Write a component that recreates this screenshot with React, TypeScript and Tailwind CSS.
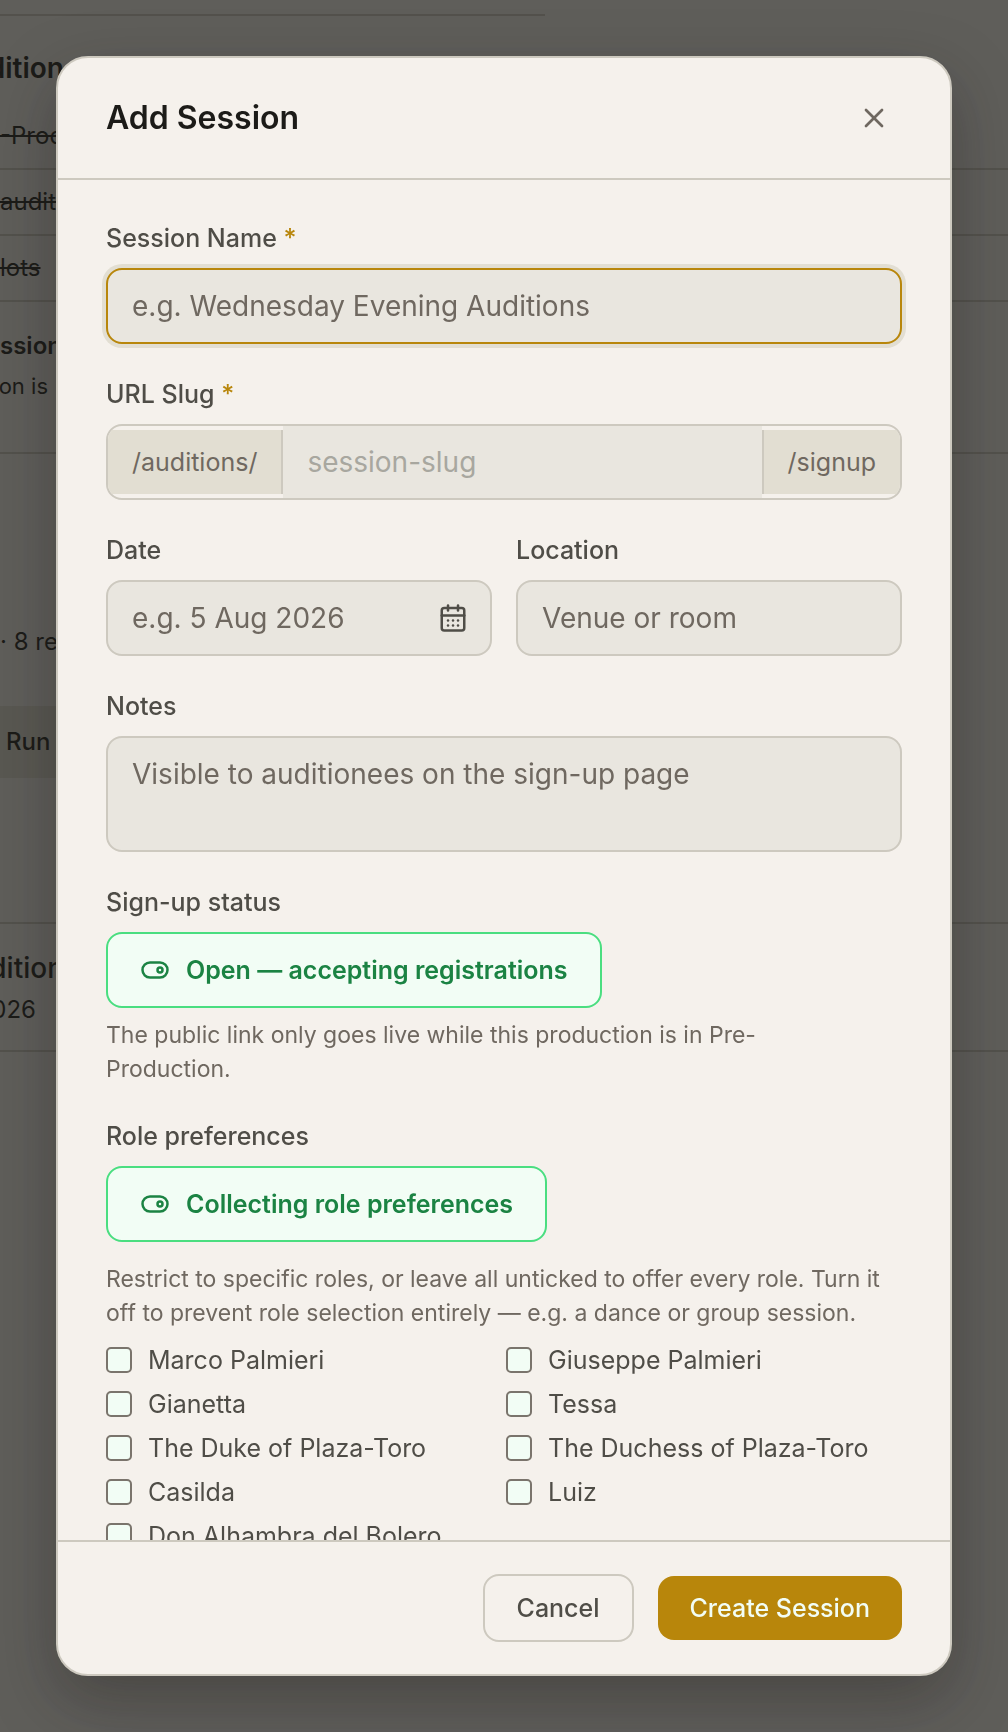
import { useState } from 'react';
import type { ReactNode } from 'react';
import { CalendarDays, X } from 'lucide-react';
import { TbToggleLeft, TbToggleRight } from 'react-icons/tb';

const ROLES = [
  'Marco Palmieri',
  'Giuseppe Palmieri',
  'Gianetta',
  'Tessa',
  'The Duke of Plaza-Toro',
  'The Duchess of Plaza-Toro',
  'Casilda',
  'Luiz',
  'Don Alhambra del Bolero',
];

const inputClass =
  'block w-full rounded-2xl border-2 border-[#cdc9bf] bg-[#e9e6df] px-6 py-4 text-[28px] leading-10 text-[#1c1b18] placeholder:text-[#6f6860] outline-none focus:border-[#b8860b] focus:ring-4 focus:ring-[#e2ded2]';

function Label({ htmlFor, required, children }: { htmlFor: string; required?: boolean; children: ReactNode }) {
  return (
    <label htmlFor={htmlFor} className="mb-3 block text-[25px] leading-9 font-medium text-[#4f4d47]">
      {children}
      {required && <span className="text-[#b8860b]"> *</span>}
    </label>
  );
}

function ToggleButton({ id, on, onClick, children }: { id: string; on: boolean; onClick: () => void; children: ReactNode }) {
  const Icon = on ? TbToggleRight : TbToggleLeft;
  return (
    <button
      id={id}
      type="button"
      aria-pressed={on}
      onClick={onClick}
      className={`flex items-center gap-4 rounded-2xl border-2 px-8 py-[18px] text-[25px] leading-9 font-semibold ${
        on ? 'border-[#4ade80] bg-[#f2fdf5] text-[#1b8343]' : 'border-[#cdc9bf] bg-[#e9e6df] text-[#4f4d47]'
      }`}
    >
      <Icon size={30} />
      {children}
    </button>
  );
}

// The production page that stays visible behind the dialog
function ProductionPage() {
  return (
    <main className="h-screen overflow-hidden bg-[#f5f1ec] text-2xl leading-9 whitespace-nowrap text-[#1c1b18]">
      <div className="h-4 w-[545px] border-b-2 border-[#cdc9bf]" />
      <h2 className="flex h-[88px] w-16 items-center justify-end pt-4 text-[28px] font-semibold">dition</h2>
      <ul className="line-through">
        <li className="border-b-2 border-[#cdc9bf] py-[14px]">-Prod</li>
        <li className="border-b-2 border-[#cdc9bf] py-[14px]">auditi</li>
        <li className="border-b-2 border-[#cdc9bf] py-[14px]">lots</li>
      </ul>
      <div className="h-[152px] border-b-2 border-[#cdc9bf] pt-[26px]">
        <h3 className="font-semibold">ssion</h3>
        <p className="flex w-12 justify-end pt-1 text-[22px]">on is</p>
      </div>
      <p className="pt-[170px] pb-[46px]">· 8 re</p>
      <div className="w-[500px] bg-[#e2ded2] px-1.5 py-[18px] font-medium">Run</div>
      <div className="mt-36 border-y-2 border-[#cdc9bf] pt-6 pb-[22px]">
        <h3 className="flex w-16 justify-end text-[28px] leading-10 font-medium">dition</h3>
        <p className="flex w-9 justify-end pt-1">026</p>
      </div>
    </main>
  );
}

export default function App() {
  const [name, setName] = useState('');
  const [slug, setSlug] = useState('');
  const [signupOpen, setSignupOpen] = useState(true);
  const [collectRoles, setCollectRoles] = useState(true);
  const [roles, setRoles] = useState<string[]>([]);

  function toggleRole(role: string) {
    setRoles((prev) => (prev.includes(role) ? prev.filter((r) => r !== role) : [...prev, role]));
  }

  return (
    <div className="font-[Inter,sans-serif]">
      <ProductionPage />

      <div className="fixed inset-0 flex items-center justify-center bg-[#1c1b18]/69 p-14">
        <form
          role="dialog"
          aria-labelledby="dialog-title"
          onSubmit={(event) => event.preventDefault()}
          className="flex max-h-full w-full max-w-4xl flex-col overflow-hidden rounded-[32px] border-2 border-[#cdc9bf] bg-[#f5f1ec] shadow-[0_24px_64px_rgba(28,27,24,0.35)]"
        >
          <header className="flex shrink-0 items-center justify-between border-b-2 border-[#cdc9bf] px-12 py-8">
            <h1 id="dialog-title" className="text-[32px] leading-10 font-semibold text-[#1c1b18]">
              Add Session
            </h1>
            <button type="button" aria-label="Close" className="rounded-xl p-3 text-[#6f6860]">
              <X size={32} />
            </button>
          </header>

          <div className="min-h-0 flex-1 overflow-y-auto px-12 py-10 [scrollbar-width:none]">
            <div className="flex flex-col gap-8">
              <div>
                <Label htmlFor="name" required>
                  Session Name
                </Label>
                <input
                  id="name"
                  autoFocus
                  value={name}
                  onChange={(event) => setName(event.target.value)}
                  placeholder="e.g. Wednesday Evening Auditions"
                  className={`${inputClass} caret-transparent`}
                />
              </div>

              <div>
                <Label htmlFor="slug" required>
                  URL Slug
                </Label>
                <div className="flex items-center overflow-hidden rounded-2xl border-2 border-[#cdc9bf]">
                  <span className="border-r-2 border-[#cdc9bf] bg-[#e2ded2] px-6 py-[14px] text-[25px] leading-9 text-[#6f6860]">
                    /auditions/
                  </span>
                  <input
                    id="slug"
                    value={slug}
                    onChange={(event) => setSlug(event.target.value)}
                    placeholder="session-slug"
                    className="min-w-0 flex-1 bg-[#e9e6df] px-6 py-4 text-[28px] leading-10 text-[#1c1b18] outline-none placeholder:text-[#a8a79f]"
                  />
                  <span className="border-l-2 border-[#cdc9bf] bg-[#e2ded2] px-6 py-[14px] text-[25px] leading-9 text-[#6f6860]">
                    /signup
                  </span>
                </div>
              </div>

              <div className="grid grid-cols-2 gap-6">
                <div>
                  <Label htmlFor="date">Date</Label>
                  <div className="relative">
                    <input id="date" placeholder="e.g. 5 Aug 2026" className={`${inputClass} pr-20`} />
                    <button
                      type="button"
                      aria-label="Pick a date"
                      className="absolute inset-y-0 right-0 px-6 text-[#4f4d47]"
                    >
                      <CalendarDays size={30} />
                    </button>
                  </div>
                </div>
                <div>
                  <Label htmlFor="location">Location</Label>
                  <input id="location" placeholder="Venue or room" className={inputClass} />
                </div>
              </div>

              <div>
                <Label htmlFor="notes">Notes</Label>
                <textarea
                  id="notes"
                  placeholder="Visible to auditionees on the sign-up page"
                  className={`${inputClass} h-[116px] resize-none`}
                />
              </div>

              <div>
                <Label htmlFor="signup-status">Sign-up status</Label>
                <ToggleButton id="signup-status" on={signupOpen} onClick={() => setSignupOpen(!signupOpen)}>
                  {signupOpen ? 'Open — accepting registrations' : 'Closed'}
                </ToggleButton>
                <p className="mt-2.5 text-[23px] leading-[34px] text-[#6f6860]">
                  The public link only goes live while this production is in Pre-
                  <br />
                  Production.
                </p>
              </div>

              <div>
                <Label htmlFor="role-preferences">Role preferences</Label>
                <ToggleButton id="role-preferences" on={collectRoles} onClick={() => setCollectRoles(!collectRoles)}>
                  {collectRoles ? 'Collecting role preferences' : 'Not collecting'}
                </ToggleButton>
                <p className="mt-5 text-[23px] leading-[34px] text-[#6f6860]">
                  Restrict to specific roles, or leave all unticked to offer every role. Turn it
                  <br />
                  off to prevent role selection entirely — e.g. a dance or group session.
                </p>
                <div className="mt-3 grid grid-cols-2 gap-x-1 gap-y-2">
                  {ROLES.map((role) => (
                    <label key={role} className="flex items-center gap-4 text-[25px] leading-9 text-[#4f4d47]">
                      <input
                        type="checkbox"
                        checked={roles.includes(role)}
                        onChange={() => toggleRole(role)}
                        className="size-[26px] shrink-0 appearance-none rounded-[5px] border-2 border-[#7a746c] bg-[#f2fdf5] checked:bg-[#b8860b]"
                      />
                      {role}
                    </label>
                  ))}
                </div>
              </div>
            </div>
          </div>

          <footer className="flex shrink-0 items-center justify-end gap-6 border-t-2 border-[#cdc9bf] px-12 py-8">
            <button
              type="button"
              className="rounded-2xl border-2 border-[#cdc9bf] px-8 py-[14px] text-[25px] leading-9 font-medium text-[#4f4d47]"
            >
              Cancel
            </button>
            <button
              type="submit"
              className="rounded-2xl bg-[#b8860b] px-8 py-[14px] text-[25px] leading-9 font-medium text-[#f2fdf5]"
            >
              Create Session
            </button>
          </footer>
        </form>
      </div>
    </div>
  );
}
